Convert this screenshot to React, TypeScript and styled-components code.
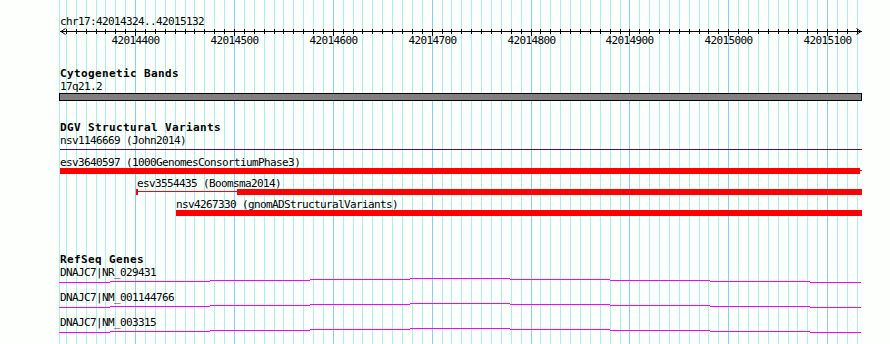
import React from "react";
import styled, { createGlobalStyle } from "styled-components";

const VIEW = { chrom: "chr17", start: 42014324, end: 42015132 };
const ORIGIN_BP = 42014400;
const ORIGIN_X = 135.6;
const PX_PER_BP = 0.9886;
const LEFT_EDGE = 60;
const RIGHT_EDGE = 862;
const PAGE_W = 890;
const PAGE_H = 344;

const PAPER = "#fcfffc";
const INK = "#000000";
const GRID_LIGHT = "#afeeee";
const GRID_DARK = "#87cefa";
const RED = "#ff0000";
const MAGENTA = "#ff00ff";
const INDIGO = "#3f0f80";
const BAND_GRAY = "#808080";

const xOf = (bp: number) =>
  Math.min(RIGHT_EDGE, Math.floor(ORIGIN_X + (bp - ORIGIN_BP) * PX_PER_BP));

const tickBps = Array.from({ length: 81 }, (_, i) => ORIGIN_BP + (i - 7) * 10);
const majorBps = tickBps.filter((bp) => bp % 100 === 0);

type PartKind = "cap" | "thin" | "thick";
type Part = { kind: PartKind; from: number; to: number };
type SvFeature = {
  id: string;
  source: string;
  labelAt: number;
  gap: number;
  parts: Part[];
};

const dgvFeatures: SvFeature[] = [
  {
    id: "esv3640597",
    source: "1000GenomesConsortiumPhase3",
    labelAt: VIEW.start,
    gap: 7,
    parts: [
      { kind: "thick", from: VIEW.start, to: 42015133 },
      { kind: "thin", from: 42015133, to: 42016000 },
    ],
  },
  {
    id: "esv3554435",
    source: "Boomsma2014",
    labelAt: 42014402,
    gap: 4,
    parts: [
      { kind: "cap", from: 42014401, to: 42014403 },
      { kind: "thin", from: 42014403, to: 42014503 },
      { kind: "thick", from: 42014503, to: 42016000 },
    ],
  },
  {
    id: "nsv4267330",
    source: "gnomADStructuralVariants",
    labelAt: 42014441,
    gap: 4,
    parts: [{ kind: "thick", from: 42014441, to: 42016000 }],
  },
];

const genes = [
  { name: "DNAJC7|NR_029431", gap: 2 },
  { name: "DNAJC7|NM_001144766", gap: 8 },
  { name: "DNAJC7|NM_003315", gap: 8 },
];

const GENE_STEPS = [59, 110, 210, 310, 410, 510, 610, 710, 810, 862];
const GENE_LEVELS = [4, 3, 2, 1, 0, 1, 2, 3, 4];

const GlobalStyle = createGlobalStyle`
  html, body {
    margin: 0;
    padding: 0;
    background: ${PAPER};
  }
  #root {
    width: ${PAGE_W}px;
    height: ${PAGE_H}px;
  }
`;

const Page = styled.div`
  position: relative;
  width: ${PAGE_W}px;
  height: ${PAGE_H}px;
  overflow: hidden;
  background: ${PAPER};
  color: ${INK};
  font-family: "DejaVu Sans Mono", "Liberation Mono", monospace;
`;

const Backdrop = styled.svg`
  position: absolute;
  left: 0;
  top: 0;
  display: block;
`;

const Tracks = styled.div`
  position: relative;
  display: flex;
  flex-direction: column;
  align-items: flex-start;
`;

const SmallText = styled.div<{ $gap?: number }>`
  margin-top: ${(p) => p.$gap ?? 0}px;
  font-size: 11px;
  line-height: 11px;
  height: 11px;
  letter-spacing: -0.62px;
  white-space: nowrap;
`;

const RulerCaption = styled(SmallText)`
  margin-left: ${LEFT_EDGE}px;
`;

const TrackSection = styled.section<{ $gap: number }>`
  display: flex;
  flex-direction: column;
  align-items: flex-start;
  margin-top: ${(p) => p.$gap}px;
`;

const TrackTitle = styled.h2`
  margin: 0 0 0 ${LEFT_EDGE}px;
  font-size: 11px;
  font-weight: 700;
  line-height: 11px;
  height: 11px;
  letter-spacing: 0.38px;
  white-space: nowrap;
`;

const TrackLabel = styled(SmallText)`
  margin-left: ${LEFT_EDGE}px;
`;

const RulerSvg = styled.svg`
  display: block;
`;

const RulerNumber = styled.text`
  font-family: "DejaVu Sans Mono", "Liberation Mono", monospace;
  font-size: 11px;
  letter-spacing: -0.62px;
  fill: ${INK};
`;

const Band = styled.div`
  margin-top: 1px;
  margin-left: 59px;
  width: ${RIGHT_EDGE - 59}px;
  height: 8px;
  box-sizing: border-box;
  border: 1px solid ${INK};
  background: ${BAND_GRAY};
`;

const SpanLine = styled.div`
  margin-top: 3px;
  margin-left: ${LEFT_EDGE}px;
  width: ${RIGHT_EDGE - LEFT_EDGE}px;
  height: 1px;
  background: ${INDIGO};
`;

const FeatureRow = styled.div<{ $gap: number }>`
  display: flex;
  flex-direction: column;
  align-items: flex-start;
  margin-top: ${(p) => p.$gap}px;
`;

const Glyph = styled.div`
  display: flex;
  align-items: flex-start;
  height: 6px;
`;

const GlyphPart = styled.div<{ $kind: PartKind }>`
  flex: none;
  background: ${RED};
  height: ${(p) => (p.$kind === "thin" ? 1 : 6)}px;
  margin-top: ${(p) => (p.$kind === "thin" ? 2 : 0)}px;
`;

const GeneRow = styled.div<{ $gap: number }>`
  display: flex;
  flex-direction: column;
  align-items: flex-start;
  margin-top: ${(p) => p.$gap}px;
`;

const GeneSvg = styled.svg`
  display: block;
`;

const GridBackdrop = () => (
  <Backdrop width={PAGE_W} height={PAGE_H} shapeRendering="crispEdges">
    <rect x={59} y={0} width={1} height={PAGE_H} fill={GRID_LIGHT} />
    {tickBps.map((bp) => (
      <rect
        key={bp}
        x={xOf(bp)}
        y={0}
        width={1}
        height={PAGE_H}
        fill={bp % 100 === 0 ? GRID_DARK : GRID_LIGHT}
      />
    ))}
  </Backdrop>
);

const Ruler = () => (
  <RulerSvg width={PAGE_W} height={21}>
    <g shapeRendering="crispEdges">
      <rect x={LEFT_EDGE} y={4} width={RIGHT_EDGE - LEFT_EDGE} height={1} fill={INK} />
      {tickBps.map((bp) => (
        <rect
          key={bp}
          x={xOf(bp)}
          y={2}
          width={1}
          height={bp % 100 === 0 ? 7 : 5}
          fill={INK}
        />
      ))}
    </g>
    <path d="M65.5 1.5 L61 4.5 L65.5 7.5" stroke={INK} strokeWidth={1} fill="none" />
    <path d="M856.5 1.5 L861 4.5 L856.5 7.5" stroke={INK} strokeWidth={1} fill="none" />
    {majorBps.map((bp) => (
      <RulerNumber key={bp} x={xOf(bp) + 0.5} y={17} textAnchor="middle">
        {bp}
      </RulerNumber>
    ))}
  </RulerSvg>
);

const SvGlyph = ({ parts }: { parts: Part[] }) => {
  const left = xOf(parts[0].from);
  return (
    <Glyph style={{ marginLeft: left }}>
      {parts.map((part, i) => (
        <GlyphPart
          key={i}
          $kind={part.kind}
          style={{ width: xOf(part.to) - xOf(part.from) }}
        />
      ))}
    </Glyph>
  );
};

const GeneLine = () => (
  <GeneSvg width={PAGE_W} height={6} shapeRendering="crispEdges">
    {GENE_LEVELS.map((level, i) => (
      <rect
        key={i}
        x={GENE_STEPS[i]}
        y={level}
        width={GENE_STEPS[i + 1] - GENE_STEPS[i] - (i === GENE_LEVELS.length - 1 ? 1 : 0)}
        height={1}
        fill={MAGENTA}
      />
    ))}
  </GeneSvg>
);

export default function App() {
  return (
    <>
      <GlobalStyle />
      <Page>
        <GridBackdrop />
        <Tracks>
          <RulerCaption $gap={16}>
            {VIEW.chrom}:{VIEW.start}..{VIEW.end}
          </RulerCaption>
          <Ruler />

          <TrackSection $gap={20}>
            <TrackTitle>Cytogenetic Bands</TrackTitle>
            <TrackLabel $gap={2}>17q21.2</TrackLabel>
            <Band />
          </TrackSection>

          <TrackSection $gap={21}>
            <TrackTitle>DGV Structural Variants</TrackTitle>
            <TrackLabel $gap={2}>nsv1146669 (John2014)</TrackLabel>
            <SpanLine />
            {dgvFeatures.map((f) => (
              <FeatureRow key={f.id} $gap={f.gap}>
                <SmallText style={{ marginLeft: xOf(f.labelAt) }}>
                  {f.id} ({f.source})
                </SmallText>
                <SvGlyph parts={f.parts} />
              </FeatureRow>
            ))}
          </TrackSection>

          <TrackSection $gap={38}>
            <TrackTitle>RefSeq Genes</TrackTitle>
            {genes.map((g) => (
              <GeneRow key={g.name} $gap={g.gap}>
                <TrackLabel>{g.name}</TrackLabel>
                <GeneLine />
              </GeneRow>
            ))}
          </TrackSection>
        </Tracks>
      </Page>
    </>
  );
}
